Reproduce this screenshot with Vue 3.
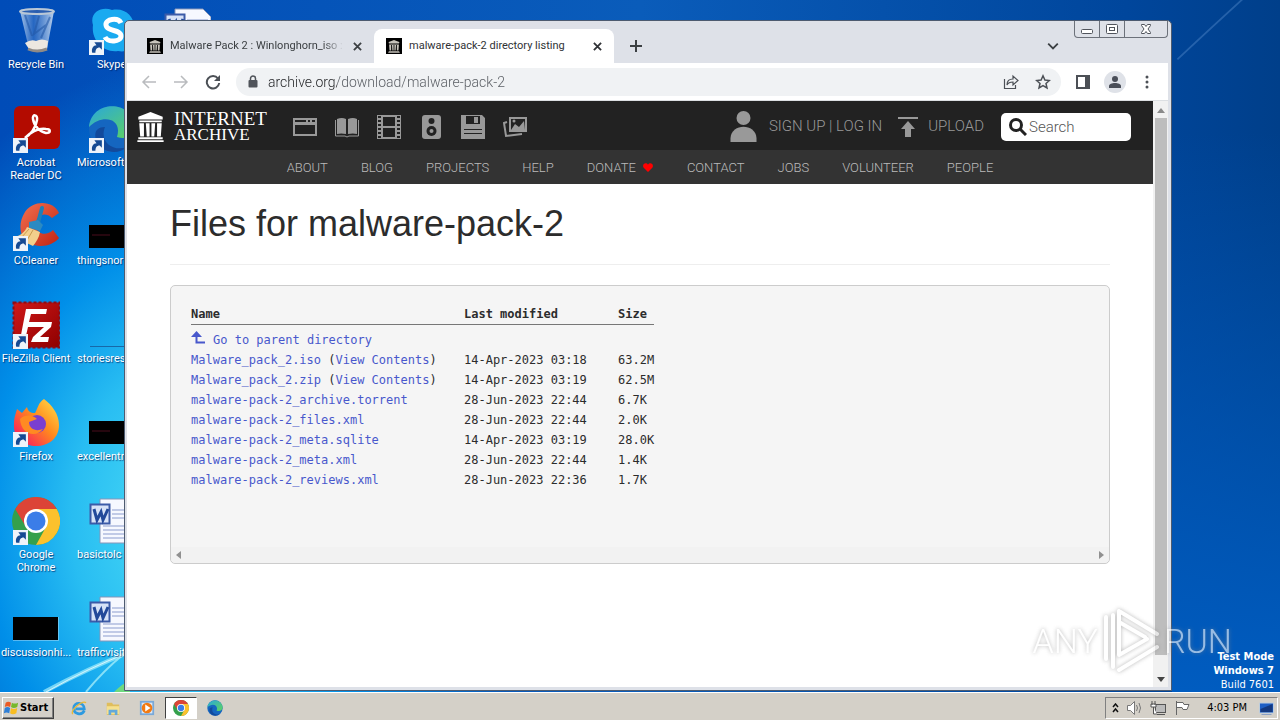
<script setup>
const mainShortcuts = [
  { icon: 'bin', label: 'Recycle Bin', link: false },
  { icon: 'acrobat', label: 'Acrobat Reader DC', link: true },
  { icon: 'ccleaner', label: 'CCleaner', link: true },
  { icon: 'filezilla', label: 'FileZilla Client', link: true },
  { icon: 'firefox', label: 'Firefox', link: true },
  { icon: 'chrome', label: 'Google Chrome', link: true },
  { icon: 'black', label: 'discussionhi...', link: false },
]
const sideShortcuts = [
  { icon: 'skype', label: 'Skype', link: true },
  { icon: 'edge', label: 'Microsoft', link: true },
  { icon: 'trace', label: 'thingsnor', link: false },
  { icon: 'line', label: 'storiesres', link: false },
  { icon: 'trace', label: 'excellentr', link: false },
  { icon: 'word', label: 'basictolc', link: false },
  { icon: 'word', label: 'trafficvisit', link: false },
]
const navLinks = ['ABOUT', 'BLOG', 'PROJECTS', 'HELP', 'DONATE', 'CONTACT', 'JOBS', 'VOLUNTEER', 'PEOPLE']
const files = [
  { name: 'Malware_pack_2.iso', view: true, date: '14-Apr-2023 03:18', size: '63.2M' },
  { name: 'Malware_pack_2.zip', view: true, date: '14-Apr-2023 03:19', size: '62.5M' },
  { name: 'malware-pack-2_archive.torrent', date: '28-Jun-2023 22:44', size: '6.7K' },
  { name: 'malware-pack-2_files.xml', date: '28-Jun-2023 22:44', size: '2.0K' },
  { name: 'malware-pack-2_meta.sqlite', date: '14-Apr-2023 03:19', size: '28.0K' },
  { name: 'malware-pack-2_meta.xml', date: '28-Jun-2023 22:44', size: '1.4K' },
  { name: 'malware-pack-2_reviews.xml', date: '28-Jun-2023 22:36', size: '1.7K' },
]
</script>

<template>
  <div class="screen">
    <svg class="defs" width="0" height="0" aria-hidden="true">
      <defs>
        <linearGradient id="gBin" x1="0" x2="1"><stop offset="0" stop-color="#c9dcf2" stop-opacity=".85" /><stop offset=".4" stop-color="#3f78c8" stop-opacity=".6" /><stop offset="1" stop-color="#dbe8f6" stop-opacity=".85" /></linearGradient>
        <linearGradient id="gEdge" x1="0" y1="0" x2="1" y2="1"><stop offset="0" stop-color="#2aa7dc" /><stop offset="1" stop-color="#5fd45c" /></linearGradient>
        <linearGradient id="gFox" x1="1" y1="0" x2="0" y2="1"><stop offset="0" stop-color="#ffe34a" /><stop offset=".45" stop-color="#ff8a1e" /><stop offset=".8" stop-color="#fb3350" /><stop offset="1" stop-color="#e51880" /></linearGradient>
        <linearGradient id="gCc" x1="0" y1="0" x2="1" y2="1"><stop offset="0" stop-color="#f2704f" /><stop offset="1" stop-color="#c22312" /></linearGradient>
        <linearGradient id="gFz" x1="0" y1="0" x2="1" y2="1"><stop offset="0" stop-color="#d01818" /><stop offset="1" stop-color="#8e0000" /></linearGradient>
        <symbol id="i-bin" viewBox="0 0 48 48">
          <path d="M8 4h34l-7 38q-9 4-18 0z" fill="url(#gBin)" />
          <path d="M13 36q6-4 11-2 6-3 12 0l-1 8q-9 4-18 0z" fill="#ece7e0" />
          <path d="m13 8 7 21M27 9l-5 18 12-9M38 10l-9 21" stroke="#2358a6" stroke-width="2" fill="none" opacity=".6" />
          <ellipse cx="25" cy="4.500" rx="17" ry="2.500" fill="#2a5eb0" stroke="#b9c7d6" stroke-width="2" />
          <path d="M16 42q9 4 19 0" stroke="#8f8a86" stroke-width="3" fill="none" />
        </symbol>
        <symbol id="i-acrobat" viewBox="0 0 48 48">
          <rect x="2" y="1" width="46" height="43" rx="6" fill="#b30b00" />
          <path d="M13 33c5-3 11-10 12-18 1-6-5-6-4-1 1 7 7 13 13 14 5 0 5-4 0-4-7-1-15 3-21 9z" fill="none" stroke="#fff" stroke-width="2.500" />
        </symbol>
        <symbol id="i-ccleaner" viewBox="0 0 48 48">
          <path d="M47 10C42-2 22-4 13 9c-9 14-4 31 9 33 10 3 20-1 25-7l-6-8c-6 6-16 5-17-4-1-11 9-15 16-8z" fill="url(#gCc)" />
          <path d="M30 5 26 20" stroke="#1e7fb8" stroke-width="4" stroke-linecap="round" />
          <path d="m17 19 9-2 5 5-3 6-11-3z" fill="#2b8ac2" />
          <path d="m15 24 13 5c-1 6-4 10-7 14L2 34c6-1 11-5 13-10z" fill="#f3cf8c" />
          <path d="m9 35 8-9m-3 13 7-12" stroke="#c99a4e" />
        </symbol>
        <symbol id="i-filezilla" viewBox="0 0 48 48">
          <rect x="1.500" y="1.500" width="46" height="45" fill="url(#gFz)" stroke="#8d0b14" stroke-width="2" stroke-dasharray="3 2" />
          <path d="M14 8h21l-1 5H19l-2 8h12l-2 5H16l-3 13H8z" fill="#fff" />
          <path d="M25 21h15l-1 5-11 10h9l-1 5H19l2-5 11-10h-8z" fill="#fff" />
        </symbol>
        <symbol id="i-firefox" viewBox="0 0 48 48">
          <path d="M32 0c8 6 15 15 15 26 0 13-10 21-23 21C10 47 1 38 2 25c0-7 2-11 3-15l5 4 5-6c1 4 3 6 8 6 3-5 3-10 9-14z" fill="url(#gFox)" />
          <circle cx="25" cy="25" r="9" fill="#7a3fd0" />
          <path d="M8 20c5-5 13-4 17 0l-8 3c0 7 7 10 14 7-7 9-22 6-23-10z" fill="#ff8a22" />
        </symbol>
        <symbol id="i-chrome" viewBox="0 0 48 48">
          <circle cx="24" cy="24" r="24" fill="#34a04c" />
          <path d="M3.200 12A24 24 0 0 1 44.800 12H24L14 30z" fill="#dc4437" />
          <path d="M44.800 12A24 24 0 0 1 24 48l10-18-10-18z" fill="#fbc12d" />
          <circle cx="24" cy="24" r="12" fill="#fff" /><circle cx="24" cy="24" r="9.500" fill="#3b7de8" />
        </symbol>
        <symbol id="i-black" viewBox="0 0 48 48">
          <rect x="1" y="22" width="46" height="24" fill="#d9eefb" opacity=".4" /><rect x="1" y="22" width="45" height="23" fill="#000" />
        </symbol>
        <symbol id="i-trace" viewBox="0 0 48 48">
          <rect x="1" y="22" width="46" height="23" fill="#000" /><path d="M4 32h18" stroke="#7c1530" opacity=".6" />
        </symbol>
        <symbol id="i-line" viewBox="0 0 48 48"><path d="M2 45.500h46" stroke="#1768a8" /></symbol>
        <symbol id="i-skype" viewBox="0 0 48 48">
          <path d="M5 18C1 5 14-1 24 3c14-3 24 8 22 21 5 10-2 23-16 20C14 46 3 32 5 18z" fill="#1aaaf0" />
          <path d="M33 16c-3-6-16-4-15 2 1 7 15 4 15 11 0 6-13 7-16 1" fill="none" stroke="#fff" stroke-width="5" />
        </symbol>
        <symbol id="i-edge" viewBox="0 0 48 48">
          <circle cx="24" cy="24" r="23" fill="#1566c0" />
          <path d="M1 22C4-6 45-5 47 22c0 9-9 13-18 10C35 12 13 9 1 22z" fill="url(#gEdge)" />
          <path d="M17 22c-6 15 8 25 22 20-9 8-23 6-30-4-4-10-1-16 8-16z" fill="#124a9c" />
        </symbol>
        <symbol id="i-word" viewBox="0 0 48 48">
          <path d="M12 2h28l8 8v36H12z" fill="#f6f8ff" stroke="#8795b8" />
          <path d="M24 13h21M24 17h21M24 21h21M15 29h30M15 33h30M15 37h30M15 41h30" stroke="#8b9cce" />
          <rect x="2.500" y="7.500" width="19" height="19" fill="#d7e2f7" stroke="#3c5ba8" stroke-width="2" />
          <path d="m6 12 3 11 4-8 2 8 5-11" fill="none" stroke="#23499a" stroke-width="3" />
        </symbol>
        <symbol id="i-temple" viewBox="0 0 28 32">
          <path d="M14 0 27 5v3H1V5zM2 9h24v2H2zM1 27h26v2H1zM0 30h28v2H0z" fill="currentColor" />
          <path d="M2 12h5v14H3zM9 12h4v14h-3zM15 12h4l-1 14h-3zM21 12h5l-1 14h-4z" fill="currentColor" />
        </symbol>
        <symbol id="i-shut" viewBox="0 0 10 10"><path d="m1 1 8 8M9 1 1 9" stroke="currentColor" stroke-width="2" /></symbol>
      </defs>
    </svg>

    <main class="desktop">
      <svg class="rays" viewBox="0 0 130 90" aria-hidden="true">
        <path d="M44 90Q88 66 130 50" fill="none" stroke="#a4eefb" stroke-width="4" opacity=".7" />
        <path d="M46 90Q88 66 130 50" fill="none" stroke="#fff" stroke-width="1" opacity=".7" />
        <path d="M86 90Q104 68 124 52" fill="none" stroke="#b2f4fb" stroke-width="2" opacity=".7" />
        <path d="M114 90q8-8 16-12v12z" fill="#6fd97e" />
      </svg>
      <svg class="beam" viewBox="0 0 120 120" aria-hidden="true"><path d="M6 66Q40 34 84-6" fill="none" stroke="#5d92cf" stroke-width="2" opacity=".4" /></svg>
      <ul class="shortcuts first">
        <li v-for="s in mainShortcuts" :key="s.label">
          <span class="pic"><svg class="art"><use :href="'#i-' + s.icon" /></svg>
            <svg v-if="s.link" class="arrow" viewBox="0 0 14 14"><rect width="14" height="14" fill="#eef3fa" /><path d="M3 12c-1-4 1-7 4-7L5 2h7v7l-2-2c-3 0-4 2-4 5z" fill="#164a93" /></svg>
          </span>
          <span class="caption">{{ s.label }}</span>
        </li>
      </ul>
      <ul class="shortcuts second">
        <li v-for="s in sideShortcuts" :key="s.label" :class="{ mid: s.label === 'Skype' }">
          <span class="pic"><svg class="art"><use :href="'#i-' + s.icon" /></svg>
            <svg v-if="s.link" class="arrow" viewBox="0 0 14 14"><rect width="14" height="14" fill="#eef3fa" /><path d="M3 12c-1-4 1-7 4-7L5 2h7v7l-2-2c-3 0-4 2-4 5z" fill="#164a93" /></svg>
          </span>
          <span class="caption">{{ s.label }}</span>
        </li>
      </ul>
      <ul class="shortcuts third">
        <li><span class="pic"><svg class="art"><use href="#i-word" /></svg></span></li>
      </ul>

      <section class="window" aria-label="Browser">
        <header class="titlebar">
          <div class="tab">
            <span class="fav"><svg><use href="#i-temple" /></svg></span>
            <span class="tabname fade">Malware Pack 2 : Winlonghorn_iso :</span>
            <button class="shut" aria-label="Close tab"><svg><use href="#i-shut" /></svg></button>
          </div>
          <div class="tab active">
            <span class="fav"><svg><use href="#i-temple" /></svg></span>
            <span class="tabname">malware-pack-2 directory listing</span>
            <button class="shut" aria-label="Close tab"><svg><use href="#i-shut" /></svg></button>
          </div>
          <button class="plus" aria-label="New tab"><svg viewBox="0 0 12 12"><path d="M6 0v12M0 6h12" stroke="currentColor" stroke-width="2" /></svg></button>
          <button class="chevron" aria-label="Search tabs"><svg viewBox="0 0 10 10"><path d="m1 3 4 4 4-4" fill="none" stroke="currentColor" stroke-width="1.500" /></svg></button>
          <div class="sysbuttons">
            <button aria-label="Minimize"><svg viewBox="0 0 14 12"><rect x="1.500" y="6.500" width="11" height="4" rx="1" fill="#fff" stroke="#50545c" /></svg></button>
            <button aria-label="Maximize"><svg viewBox="0 0 14 12"><rect x="1.500" y="1.500" width="11" height="9" rx="1" fill="#fff" stroke="#50545c" /><rect x="4.500" y="4.500" width="5" height="3" fill="#fff" stroke="#50545c" /></svg></button>
            <button class="wide" aria-label="Close"><svg viewBox="0 0 14 12"><path d="M2.500 1.500h3L7 3.500l1.500-2h3v1L9 6l2.500 3.500v1h-3L7 8.500l-1.500 2h-3v-1L5 6 2.500 2.500z" fill="#fff" stroke="#50545c" /></svg></button>
          </div>
        </header>

        <div class="toolbar">
          <button class="tool off" aria-label="Back"><svg viewBox="0 0 16 16"><path d="M15 8H2m6-6L2 8l6 6" /></svg></button>
          <button class="tool off" aria-label="Forward"><svg viewBox="0 0 16 16"><path d="M1 8h13M8 2l6 6-6 6" /></svg></button>
          <button class="tool" aria-label="Reload"><svg viewBox="0 0 16 16"><path d="M13 4.500A6.200 6.200 0 1 0 14.200 9" /><path d="M15 1v6H9z" fill="#4c5056" stroke="none" /></svg></button>
          <div class="omnibox">
            <svg class="lock" viewBox="0 0 10 13"><rect x="0.500" y="5" width="9" height="7.500" rx="1" fill="#50545a" /><path d="M2.500 5V3.500a2.500 2.500 0 0 1 5 0V5" fill="none" stroke="#50545a" stroke-width="1.500" /></svg>
            <input class="url" aria-label="Address" value="archive.org/download/malware-pack-2" />
            <button class="tool" aria-label="Share"><svg viewBox="0 0 16 16"><path d="M1.500 5v9.500h11V11M4 11c0-4 2-6 6-6V2l5 4.500-5 4.500V8c-3 0-5 1-6 3z" stroke-width="1.200" /></svg></button>
            <button class="tool" aria-label="Bookmark"><svg viewBox="0 0 16 16"><path d="m8 1.800 1.900 4.200 4.500.5-3.400 3 1 4.500-4-2.300L4 14l1-4.500-3.400-3L6.100 6z" stroke-width="1.500" /></svg></button>
          </div>
          <button class="tool" aria-label="Side panel"><svg viewBox="0 0 16 16"><path d="M2 2h12v12H2z" /><path d="M10 2h5v12h-5z" fill="#4c5056" stroke="none" /></svg></button>
          <button class="avatar" aria-label="Profile"><svg viewBox="0 0 14 14"><circle cx="7" cy="4" r="3" /><path d="M1 13V11c0-4 12-4 12 0v2z" /></svg></button>
          <button class="tool" aria-label="Menu"><svg viewBox="0 0 16 16"><g fill="#4c5056" stroke="none"><circle cx="8" cy="3" r="1.500" /><circle cx="8" cy="8" r="1.500" /><circle cx="8" cy="13" r="1.500" /></g></svg></button>
        </div>

        <div class="viewport">
          <article class="page">
            <header class="topbar">
              <a class="brand" href="#"><svg><use href="#i-temple" /></svg><span class="words"><span>INTERNET</span><span class="sub">ARCHIVE</span></span></a>
              <nav class="media" aria-label="Media">
                <a href="#" aria-label="Web"><svg viewBox="0 0 24 24"><path fill-rule="evenodd" d="M0 3h24v18H0zM2 5v2h11V5zM15 5v2h2V5zM19 5v2h3V5zM2 10v9h20v-9z" /></svg></a>
                <a href="#" aria-label="Texts"><svg viewBox="0 0 24 24"><path d="M2 4q5-2 9 0v15q-5-1-9 0zM13 4q5-2 9 0v15q-4-1-9 0z" /><path d="M.500 5v16H10l2 1 2-1h9.500V5" fill="none" stroke="#999" /></svg></a>
                <a href="#" aria-label="Video"><svg viewBox="0 0 24 24"><path fill-rule="evenodd" d="M0 0h24v24H0zM6 2v9h12V2zM6 13v9h12v-9z" /><path d="M2.500 1v23M21.500 1v23" stroke="#222" stroke-width="3" stroke-dasharray="2 2" /></svg></a>
                <a href="#" aria-label="Audio"><svg viewBox="0 0 24 24"><rect x="3" y="0" width="19" height="24" rx="3" /><circle cx="12.500" cy="6" r="3" fill="#222" /><circle cx="12.500" cy="16" r="5" fill="#222" /><circle cx="12.500" cy="16" r="2" /></svg></a>
                <a href="#" aria-label="Software"><svg viewBox="0 0 24 24"><path fill-rule="evenodd" d="M0 0h21l3 3v21H0zM5 1v8h14V1zM3 14v8h18v-8z" /><path d="M13 2h4v6h-4zM3 15h18v3H3zM3 19h18v3H3z" /></svg></a>
                <a href="#" aria-label="Images"><svg viewBox="0 0 24 24"><path fill-rule="evenodd" d="M6 2h18v15H6zM8 4v11h14V4z" /><path d="m8 15 4-6 4 3 5-6 1 9z" /><circle cx="11" cy="6" r="1.500" /><path d="m4 7-3 1 2 13 16-2" fill="none" stroke="#999" stroke-width="2" /></svg></a>
              </nav>
              <a class="account" href="#"><svg viewBox="0 0 26 31"><circle cx="13" cy="7" r="7" /><path d="M0 31V27c1-15 25-15 26 0v4z" /></svg><span>SIGN UP | LOG IN</span></a>
              <a class="upload" href="#"><svg viewBox="0 0 20 20"><path d="M0 0h20v2H0zM10 4l7 8h-4v8H7v-8H3z" /></svg><span>UPLOAD</span></a>
              <label class="search"><svg viewBox="0 0 18 18"><circle cx="7" cy="7" r="5.500" fill="none" stroke="#222" stroke-width="3" /><path d="m11 11 6 6" stroke="#222" stroke-width="3" /></svg><input type="text" placeholder="Search" aria-label="Search" /></label>
            </header>
            <nav class="links" aria-label="Site">
              <a v-for="n in navLinks" :key="n" href="#">{{ n }}<svg v-if="n === 'DONATE'" viewBox="0 0 12 10"><path d="M6 10 1 5C-1 1 4-1.500 6 2c2-3.500 7-1 5 3z" fill="#f00" /></svg></a>
            </nav>
            <div class="body">
              <h1>Files for malware-pack-2</h1>
              <div class="listing">
                <table>
                  <colgroup><col class="c1" /><col class="c2" /><col /></colgroup>
                  <thead><tr><th>Name</th><th>Last modified</th><th>Size</th></tr></thead>
                  <tbody>
                    <tr class="parent"><td colspan="3"><a href="#"><svg viewBox="0 0 14 13"><path d="M5.500 4v7.500H14" fill="none" stroke="currentColor" stroke-width="2" /><path d="M0 6 5.500 0 11 6z" fill="currentColor" /></svg>Go to parent directory</a></td></tr>
                    <tr v-for="f in files" :key="f.name"><td><a href="#">{{ f.name }}</a><template v-if="f.view"> (<a href="#">View Contents</a>)</template></td><td>{{ f.date }}</td><td>{{ f.size }}</td></tr>
                  </tbody>
                </table>
                <div class="hbar" aria-hidden="true"><svg viewBox="0 0 6 8"><path d="M5 0v8L0 4z" /></svg><svg viewBox="0 0 6 8"><path d="M1 0v8l5-4z" /></svg></div>
              </div>
            </div>
          </article>
          <div class="vbar" aria-hidden="true"><svg viewBox="0 0 8 5"><path d="M0 5h8L4 0z" fill="#8a8a8a" /></svg><span class="thumb"></span><svg viewBox="0 0 8 5"><path d="M0 0h8L4 5z" fill="#444" /></svg></div>
        </div>
      </section>

      <div class="build"><strong>Test Mode</strong><strong>Windows 7</strong><span>Build 7601</span></div>
      <div class="watermark">
        <span>ANY</span>
        <svg viewBox="0 0 58 66"><path d="M4 9v42M11 7v52M17 3l38 23M17 3v44l28-16M17 14l26 15M17 62l38-23" fill="none" stroke="#fff" stroke-width="4" stroke-linejoin="round" stroke-linecap="round" /></svg>
        <span>RUN</span>
      </div>
    </main>

    <footer class="taskbar">
      <button class="start"><svg viewBox="0 0 18 16"><path d="M3 2q3-2 6 0L8 7Q5 5 2 7z" fill="#ea5a24" /><path d="M10 2q3 2 7 0l-1 5q-4 2-7 0z" fill="#77b82a" /><path d="M2 8q3-2 6 0l-1 6q-3-2-6 0z" fill="#2f7fd6" /><path d="M9 8q3 2 7 0l-1 6q-4 2-7 0z" fill="#f8bd20" /></svg>Start</button>
      <div class="quick">
        <button aria-label="Internet Explorer"><svg viewBox="0 0 18 18"><path d="M15 12c-3 6-12 4-12-3s12-7 12 1H5" fill="none" stroke="#2e9ae0" stroke-width="3" /><path d="M2 16C-1 12 12 0 17 3" fill="none" stroke="#e9b938" stroke-width="1.500" /></svg></button>
        <button aria-label="Explorer"><svg viewBox="0 0 18 18"><path d="M2 3h6l1 2h7v12H2z" fill="#dfbd5c" /><path d="M2 7h14v9H2z" fill="#f6e08e" /><path d="M4 17v-6h10v6h-3v-3H7v3z" fill="#63a9da" /></svg></button>
        <button aria-label="Media Player"><svg viewBox="0 0 18 18"><rect x="1" y="1" width="16" height="16" fill="#79a8d8" /><rect x="3" y="3" width="12" height="12" fill="#dbe8f5" /><circle cx="9" cy="9" r="6" fill="#f27a12" /><path d="m7 5 6 4-6 4z" fill="#fff" /></svg></button>
        <button class="pressed" aria-label="Chrome"><svg viewBox="0 0 48 48"><use href="#i-chrome" /></svg></button>
        <button aria-label="Edge"><svg viewBox="0 0 48 48"><use href="#i-edge" /></svg></button>
      </div>
      <div class="tray">
        <svg class="up" viewBox="0 0 7 10"><path d="m1 4 2.500-3L6 4M1 9l2.500-3L6 9" fill="none" stroke="#111" stroke-width="1.500" /></svg>
        <svg viewBox="0 0 17 16"><path d="M1.500 5.500h3l4-4v13l-4-4h-3z" fill="#fff" stroke="#777" /><path d="M10.500 5q2 3 0 6M13 3q3 5 0 10" fill="none" stroke="#777" /></svg>
        <svg viewBox="0 0 17 16"><rect x="5.500" y="4.500" width="10" height="8" fill="#bbb" stroke="#555" /><path d="M7 14.500h8M2 1v4m3-4v4M1 4h5v3H1zm2.500 3v7H7" fill="#fff" stroke="#555" /></svg>
        <svg viewBox="0 0 17 16"><path d="M2.500 1v14M3 2.500h6l1 2h5l-2 5H9l-1-2H3" fill="#fff" stroke="#666" /></svg>
        <time>4:03 PM</time>
        <svg class="show" viewBox="0 0 16 16"><path d="M1 3h14v10H1z" fill="#1e5fc4" stroke="#bcd" /><path d="M2 9 14 4v8H2z" fill="#14397f" /><path d="M3 14.500h10" stroke="#8aa0c4" /></svg>
      </div>
    </footer>
  </div>
</template>

<style>
html, body { margin: 0; }
</style>

<style scoped>
* { box-sizing: border-box; }
.screen { display: flex; flex-direction: column; height: 100vh; font: 11px/13px "DejaVu Sans Condensed", "Noto Sans", sans-serif; overflow: hidden; }
.defs { position: absolute; }
button { border: 0; padding: 0; background: none; font: inherit; color: inherit; display: grid; place-items: center; }
a { text-decoration: none; color: inherit; }
svg { display: block; }
ul { list-style: none; margin: 0; padding: 0; }

.desktop { position: relative; flex: 1; overflow: hidden; background:
  radial-gradient(ellipse 340px 460px at 190px 520px, #50e0f6 0%, #28bdf2 35%, rgba(0, 150, 238, .9) 60%, rgba(0, 110, 225, 0) 100%),
  linear-gradient(90deg, #004cb8 0%, #0a5cba 50%, #00469c 88%, #003f8a 100%); }
.desktop::after { content: ""; position: absolute; right: 0; bottom: 0; width: 108px; height: 560px; background: linear-gradient(rgba(0, 92, 200, 0), #005cc0); }
.rays { position: absolute; left: 0; bottom: 0; width: 130px; height: 90px; }
.beam { position: absolute; right: 0; top: 0; width: 108px; height: 108px; }

.shortcuts { position: absolute; top: 7px; width: 72px; color: #fff; text-shadow: 1px 1px 1px rgba(0, 30, 90, .7); font: 11px/13px Roboto, "Noto Sans", sans-serif; }
.first { left: 0; }
.second { left: 76px; }
.third { left: 151px; }
.shortcuts li { height: 98px; display: flex; flex-direction: column; align-items: center; gap: 3px; text-align: center; }
.second .caption { align-self: flex-start; padding-left: 1px; white-space: nowrap; }
.second .mid .caption { padding-left: 21px; }
.pic { position: relative; width: 48px; height: 48px; }
.art { width: 48px; height: 48px; }
.arrow { position: absolute; left: 1px; bottom: 0; width: 15px; height: 15px; }

.window { position: absolute; z-index: 1; left: 124px; right: 108px; top: 20px; bottom: 1px; display: flex; flex-direction: column; background: #dee1e8; border: 1px solid #4d5b70; border-radius: 5px 5px 0 0; padding: 0 3px 3px 2px; }
.titlebar { flex: none; height: 42px; display: flex; align-items: flex-end; padding-left: 8px; position: relative; color: #3c4043; }
.tab { display: flex; align-items: center; height: 34px; width: 239px; padding: 0 11px 0 12px; gap: 7px; }
.tab.active { width: 240px; background: #fff; border-radius: 8px 8px 0 0; color: #303236; }
.fav { width: 16px; height: 16px; flex: none; background: #000; color: #c8c4bc; display: grid; place-items: center; }
.fav svg { width: 12px; height: 13px; }
.tabname { flex: 1; min-width: 0; white-space: nowrap; font: 11px/16px Roboto, "Noto Sans", sans-serif; }
.fade { mask-image: linear-gradient(90deg, #000 88%, transparent); }
.shut { width: 12px; height: 16px; flex: none; }
.shut svg { width: 9px; height: 9px; }
.plus { width: 44px; height: 34px; }
.plus svg { width: 12px; height: 12px; }
.chevron { margin-left: auto; margin-right: 109px; height: 34px; }
.chevron svg { width: 12px; height: 12px; }
.sysbuttons { position: absolute; right: 0; top: 0; display: flex; height: 17px; border: 1px solid #6c717a; border-top: 0; border-radius: 0 0 4px 4px; }
.sysbuttons button { width: 25px; border-right: 1px solid #6c717a; }
.sysbuttons .wide { width: 42px; border: 0; }
.sysbuttons svg { width: 14px; height: 12px; }

.toolbar { flex: none; height: 38px; background: #fff; display: flex; align-items: center; padding: 0 13px 0 14px; gap: 16px; border-bottom: 1px solid #dcdfe2; }
.tool { width: 16px; height: 16px; flex: none; color: #4c5056; }
.tool svg { width: 16px; height: 16px; fill: none; stroke: currentColor; stroke-width: 2; }
.off { color: #b9bbbe; }
.off svg { stroke-width: 1.5; }
.omnibox { flex: 1; height: 28px; margin-left: -1px; margin-right: -2px; border-radius: 14px; background: #f0f2f4; display: flex; align-items: center; gap: 16px; padding: 0 10px 0 12px; }
.lock { width: 10px; height: 13px; margin-right: -6px; }
.url { flex: 1; min-width: 0; border: 0; outline: 0; padding: 0; font: 300 14px/20px Roboto, "Noto Sans", sans-serif; color: transparent; background: linear-gradient(90deg, #202124 69px, #55595f 69px); background-clip: text; -webkit-background-clip: text; }
.avatar { width: 22px; height: 22px; flex: none; margin: 0 -3px; border-radius: 50%; background: #dfe2e8; }
.avatar svg { width: 14px; height: 14px; fill: #4a4e58; }

.viewport { flex: 1; min-height: 0; display: flex; background: #fff; }
.page { flex: 1; min-width: 0; overflow: hidden; background: #fff; font-family: Roboto, "Liberation Sans", sans-serif; }
.vbar { width: 15px; flex: none; background: #f1f1f1; display: flex; flex-direction: column; align-items: center; padding: 7px 0 5px; gap: 5px; }
.vbar svg { width: 8px; height: 5px; }
.thumb { width: 12px; flex: 1; margin-bottom: 17px; background: #bdbdbd; }

.topbar { height: 49px; background: #222; color: #999; display: flex; align-items: center; padding: 2px 22px 0 10px; font-size: 15px; font-weight: 300; }
.topbar svg { fill: #999; flex: none; }
.brand { display: flex; align-items: center; gap: 10px; color: #fff; width: 156px; }
.brand svg { width: 27px; height: 30px; fill: #fff; }
.words { display: flex; flex-direction: column; font: 19px/16px "Liberation Serif", serif; }
.sub { font-size: 17px; }
.media { display: flex; gap: 18px; }
.media svg { width: 24px; height: 24px; }
.account, .upload { display: flex; align-items: center; gap: 12px; white-space: nowrap; }
.account { margin-left: auto; margin-right: 16px; }
.account svg { width: 27px; height: 31px; }
.upload { gap: 10px; margin-right: 17px; }
.upload svg { width: 20px; height: 20px; }
.search { width: 130px; height: 28px; background: #fff; border-radius: 5px; display: flex; align-items: center; gap: 2px; padding-left: 8px; }
.search svg { width: 18px; height: 18px; }
.search input { flex: 1; min-width: 0; border: 0; outline: 0; padding: 0; background: none; font: 300 15px/20px Roboto, sans-serif; color: #333; }
.search input::placeholder { color: #555; opacity: 1; }
.links { height: 34px; background: #333; color: #bbb; display: flex; justify-content: center; align-items: center; gap: 33px; font-size: 13px; font-weight: 300; }
.links a { display: flex; align-items: center; gap: 6px; }
.links svg { width: 12px; height: 9px; }

.body { padding: 20px 43px 0; }
h1 { margin: 0; padding-bottom: 20px; font: 400 36px/40px "Liberation Sans", sans-serif; color: #2c2c2c; border-bottom: 1px solid #eee; }
.listing { margin-top: 20px; height: 279px; display: flex; flex-direction: column; background: #f5f5f5; border: 1px solid #ccc; border-radius: 5px; padding: 18px 0 0 20px; font: 12px/20px "DejaVu Sans Mono", monospace; color: #2c2c2c; }
table { width: 463px; table-layout: fixed; border-collapse: collapse; }
.c1 { width: 273px; }
.c2 { width: 154px; }
th, td { padding: 0; text-align: left; white-space: nowrap; height: 20px; }
thead th { border-bottom: 1px solid #777; }
.parent td { padding-top: 5px; }
.listing a { color: #4858cc; }
.parent svg { display: inline-block; width: 14px; height: 13px; margin-right: 8px; vertical-align: 0; }
.hbar { margin: auto 0 0 -20px; height: 16px; padding: 0 5px; display: flex; align-items: center; justify-content: space-between; background: #f2f2f2; border-radius: 0 0 5px 5px; }
.hbar svg { width: 6px; height: 8px; fill: #909090; }

.build { position: absolute; z-index: 2; right: 6px; bottom: 0; display: flex; flex-direction: column; align-items: flex-end; color: #fff; font: 11px/14px "DejaVu Sans Condensed", sans-serif; }
.watermark { position: absolute; z-index: 3; right: 48px; bottom: 18px; display: flex; align-items: center; gap: 4px; color: #fff; opacity: .6; font: 300 34px/34px Roboto, sans-serif; filter: drop-shadow(0 0 2px #888); }
.watermark svg { width: 58px; height: 66px; }

.taskbar { flex: none; height: 28px; background: #d4d0c8; border-top: 1px solid #fff; display: flex; align-items: center; padding: 2px 2px 0; color: #000; }
.start { display: flex; align-items: center; gap: 1px; width: 52px; height: 22px; border: 1px solid; border-color: #fff #404040 #404040 #fff; box-shadow: inset -1px -1px #808080; font-weight: 700; }
.start svg { width: 16px; height: 16px; }
.quick { display: flex; align-items: center; margin-left: 9px; gap: 2px; }
.quick button { width: 32px; height: 22px; }
.quick svg { width: 16px; height: 16px; }
.quick .pressed { background: #fff; border: 1px solid; border-color: #404040 #fff #fff #404040; }
.tray { margin-left: auto; height: 22px; display: flex; align-items: center; gap: 7px; padding: 0 2px 0 6px; border: 1px solid; border-color: #808080 #fff #fff #808080; }
.tray svg { width: 17px; height: 16px; }
.tray .up { width: 7px; height: 10px; }
.tray time { margin: 0 4px 0 9px; }
</style>
